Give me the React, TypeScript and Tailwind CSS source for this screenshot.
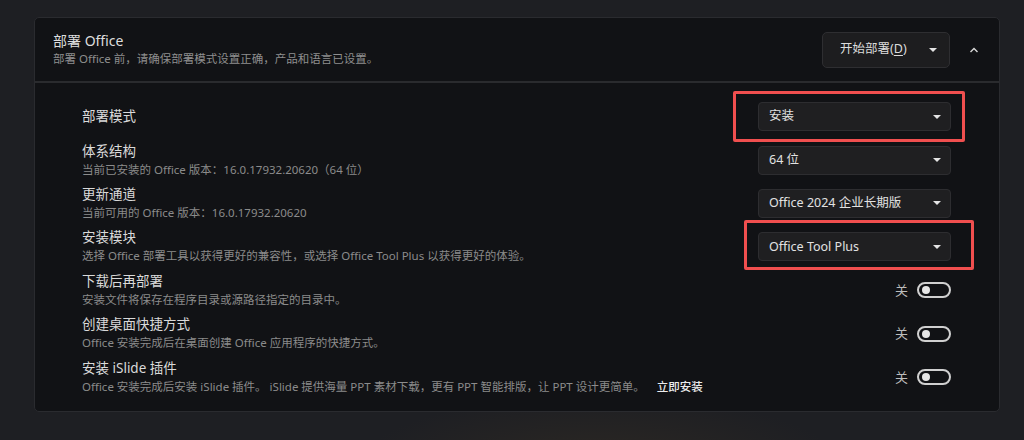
import React from "react";

const font = { fontFamily: '"Noto Sans", "Noto Sans CJK SC", sans-serif' };

const Caret = () => (
  <span className="block w-0 h-0 border-l-[4px] border-r-[4px] border-t-[4px] border-l-transparent border-r-transparent border-t-[#e4e4e4]" />
);

const Select = ({ value }: { value: string }) => (
  <div className="w-[193px] h-[29px] rounded-[4px] bg-[#1f1f21] border border-[#2d2d30] pl-[10px] pr-[9px] flex items-center justify-between">
    <span className="text-[12.5px] leading-none text-[#e2e2e2]">{value}</span>
    <Caret />
  </div>
);

const Toggle = () => (
  <div className="flex items-center">
    <span className="text-[13px] leading-none text-[#bdbdbd] mr-[9px]">关</span>
    <div className="w-[34px] h-[16px] rounded-full border-2 border-[#d0d0d0] flex items-center">
      <span className="w-[8px] h-[8px] rounded-full bg-[#e6e6e6] ml-[3px]" />
    </div>
  </div>
);

type Row = {
  label: string;
  desc?: React.ReactNode;
  control: React.ReactNode;
};

const rows: Row[] = [
  {
    label: "部署模式",
    control: (
      <div className="relative">
        <Select value="安装" />
        <div className="absolute -left-[25px] -right-[14px] -top-[11px] -bottom-[11px] border-[3px] border-[#f04f4f] rounded-[2px] pointer-events-none" />
      </div>
    ),
  },
  {
    label: "体系结构",
    desc: "当前已安装的 Office 版本：16.0.17932.20620（64 位）",
    control: <Select value="64 位" />,
  },
  {
    label: "更新通道",
    desc: "当前可用的 Office 版本：16.0.17932.20620",
    control: <Select value="Office 2024 企业长期版" />,
  },
  {
    label: "安装模块",
    desc: "选择 Office 部署工具以获得更好的兼容性，或选择 Office Tool Plus 以获得更好的体验。",
    control: (
      <div className="relative">
        <Select value="Office Tool Plus" />
        <div className="absolute -left-[14px] -right-[23px] -top-[12px] -bottom-[9px] border-[3px] border-[#f04f4f] rounded-[2px] pointer-events-none" />
      </div>
    ),
  },
  {
    label: "下载后再部署",
    desc: "安装文件将保存在程序目录或源路径指定的目录中。",
    control: <Toggle />,
  },
  {
    label: "创建桌面快捷方式",
    desc: "Office 安装完成后在桌面创建 Office 应用程序的快捷方式。",
    control: <Toggle />,
  },
  {
    label: "安装 iSlide 插件",
    desc: (
      <>
        Office 安装完成后安装 iSlide 插件。 iSlide 提供海量 PPT 素材下载，更有 PPT 智能排版，让 PPT 设计更简单。
        <span className="ml-[12px] text-[#ececec] font-medium">立即安装</span>
      </>
    ),
    control: <Toggle />,
  },
];

export default function App() {
  return (
    <div
      style={font}
      className="relative h-[440px] w-full overflow-hidden bg-[#1e1f23] bg-[radial-gradient(ellipse_240px_70px_at_600px_465px,rgba(60,50,35,0.45)_0%,transparent_100%)]"
    >
      <div className="pt-[17px] pl-[34px]">
        <div className="w-[966px] rounded-[5px] border border-[#2a2b2f] bg-[#111215]">
          {/* header */}
          <div className="h-[65px] flex items-center pl-[18px] pr-[18px] border-b-2 border-[#2a2b2e]">
            <div className="flex-1">
              <div className="text-[14px] leading-[19px] text-[#dedede]">部署 Office</div>
              <div className="text-[11.5px] leading-[18px] text-[#8e8e8e]">
                部署 Office 前，请确保部署模式设置正确，产品和语言已设置。
              </div>
            </div>
            <div className="w-[128px] h-[36px] rounded-[5px] bg-[#1d1d1f] border border-[#2e2e31] flex items-center justify-between pl-[17px] pr-[12px]">
              <span className="text-[12.5px] leading-none text-[#dcdcdc]">
                开始部署(<span className="underline underline-offset-2">D</span>)
              </span>
              <Caret />
            </div>
            <svg width="10" height="6" viewBox="0 0 10 6" className="ml-[19px] mr-[2px]">
              <path d="M1.5 5 L5 1.5 L8.5 5" fill="none" stroke="#d8d8d8" strokeWidth="1.4" />
            </svg>
          </div>

          {/* body */}
          <div className="pt-[12px] pb-[12px] pl-[47px] pr-[48px]">
            {rows.map((r) => (
              <div key={r.label} className="h-[43.4px] flex items-center justify-between">
                <div>
                  <div className="text-[13.5px] leading-[19px] text-[#dadada]">{r.label}</div>
                  {r.desc && (
                    <div className="text-[11.5px] leading-[18px] text-[#8b8b8b]">{r.desc}</div>
                  )}
                </div>
                {r.control}
              </div>
            ))}
          </div>
        </div>
      </div>
    </div>
  );
}
